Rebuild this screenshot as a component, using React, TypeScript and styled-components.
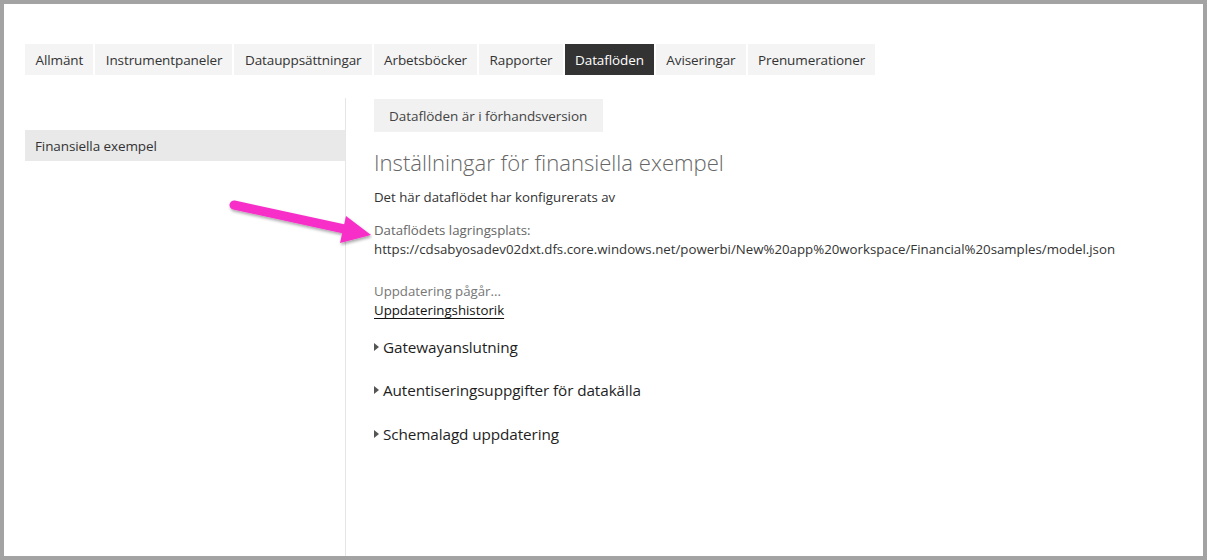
import React from "react";
import styled, { createGlobalStyle } from "styled-components";

const Global = createGlobalStyle`
  html, body { margin: 0; padding: 0; background: #fff; }
  body { font-family: "Open Sans", "Noto Sans", sans-serif; }
  * { box-sizing: border-box; }
`;

const Frame = styled.div`
  position: relative;
  width: 1207px;
  height: 560px;
  border: 4px solid #a3a3a3;
  background: #fff;
  padding: 40px 0 0 21px;
  display: flex;
  flex-direction: column;
  overflow: hidden;
`;

const Tabs = styled.div`
  display: flex;
  gap: 2px;
`;

const Tab = styled.div<{ $active?: boolean }>`
  height: 31px;
  padding: 0 10px 0 10.5px;
  display: flex;
  align-items: center;
  font-size: 13.5px;
  letter-spacing: -0.1px;
  color: ${(p) => (p.$active ? "#fff" : "#333")};
  background: ${(p) => (p.$active ? "#333" : "#f4f4f4")};
`;

const Body = styled.div`
  flex: 1;
  display: flex;
  margin-top: 23px;
`;

const Side = styled.div`
  width: 321px;
  border-right: 1px solid #e6e6e6;
  padding-top: 32px;
`;

const SideItem = styled.div`
  height: 31px;
  background: #e9e9e9;
  display: flex;
  align-items: center;
  padding-left: 10px;
  font-size: 13.5px;
  letter-spacing: -0.1px;
  color: #333;
`;

const Main = styled.div`
  padding: 1px 0 0 28px;
  display: flex;
  flex-direction: column;
  align-items: flex-start;
`;

const Badge = styled.div`
  height: 33px;
  padding: 0 16px 0 15px;
  display: flex;
  align-items: center;
  background: #f1f1f1;
  font-size: 13.5px;
  letter-spacing: -0.05px;
  color: #444;
`;

const Title = styled.h1`
  margin: 16px 0 0;
  font-size: 22.1px;
  font-weight: 300;
  color: #666;
  line-height: 28px;
  letter-spacing: 0;
`;

const Text = styled.div<{ $color?: string; $mt?: number }>`
  font-size: 13.25px;
  line-height: 19px;
  color: ${(p) => p.$color || "#333"};
  margin-top: ${(p) => p.$mt ?? 0}px;
`;

const Link = styled.a`
  font-size: 13.25px;
  line-height: 19px;
  color: #111;
  text-decoration: underline;
  text-underline-offset: 3px;
`;

const Section = styled.div<{ $mt: number }>`
  display: flex;
  align-items: center;
  margin-top: ${(p) => p.$mt}px;
  font-size: 15.3px;
  letter-spacing: -0.1px;
  color: #1e1e1e;
  gap: 2px;
`;

const Caret = styled.span`
  width: 0;
  height: 0;
  border-top: 4.5px solid transparent;
  border-bottom: 4.5px solid transparent;
  border-left: 5px solid #555;
  margin-right: 2px;
`;

const Arrow = styled.svg`
  position: absolute;
  left: 211px;
  top: 181px;
  pointer-events: none;
`;

const tabs = [
  "Allmänt",
  "Instrumentpaneler",
  "Datauppsättningar",
  "Arbetsböcker",
  "Rapporter",
  "Dataflöden",
  "Aviseringar",
  "Prenumerationer",
];

export default function App() {
  return (
    <>
      <Global />
      <Frame>
        <Tabs>
          {tabs.map((t) => (
            <Tab key={t} $active={t === "Dataflöden"}>
              {t}
            </Tab>
          ))}
        </Tabs>
        <Body>
          <Side>
            <SideItem>Finansiella exempel</SideItem>
          </Side>
          <Main>
            <Badge>Dataflöden är i förhandsversion</Badge>
            <Title>Inställningar för finansiella exempel</Title>
            <Text $mt={12}>Det här dataflödet har konfigurerats av</Text>
            <Text $mt={14} $color="#666">Dataflödets lagringsplats:</Text>
            <Text>
              https://cdsabyosadev02dxt.dfs.core.windows.net/powerbi/New%20app%20workspace/Financial%20samples/model.json
            </Text>
            <Text $mt={23} $color="#777">Uppdatering pågår...</Text>
            <Link>Uppdateringshistorik</Link>
            <Section $mt={17}>
              <Caret />
              Gatewayanslutning
            </Section>
            <Section $mt={23}>
              <Caret />
              Autentiseringsuppgifter för datakälla
            </Section>
            <Section $mt={24}>
              <Caret />
              Schemalagd uppdatering
            </Section>
          </Main>
        </Body>
        <Arrow width="170" height="70" viewBox="0 0 170 70">
          <defs>
            <filter id="sh" x="-20%" y="-50%" width="140%" height="200%">
              <feDropShadow dx="1" dy="2" stdDeviation="1.8" floodColor="#000" floodOpacity="0.35" />
            </filter>
          </defs>
          <g filter="url(#sh)">
            <line x1="19" y1="20" x2="134" y2="45" stroke="#f72fc8" strokeWidth="9" strokeLinecap="round" />
            <path d="M131 31 L156 50 L125 58 Z" fill="#f72fc8" />
          </g>
        </Arrow>
      </Frame>
    </>
  );
}
